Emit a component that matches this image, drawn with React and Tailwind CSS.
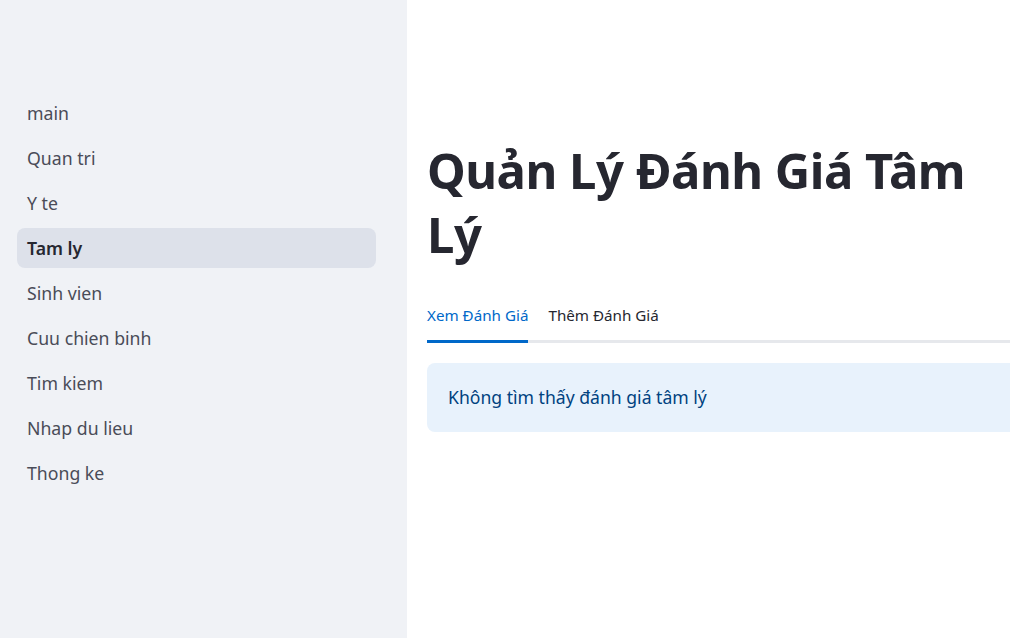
const navItems = [
  "main",
  "Quan tri",
  "Y te",
  "Tam ly",
  "Sinh vien",
  "Cuu chien binh",
  "Tim kiem",
  "Nhap du lieu",
  "Thong ke",
];

function Sidebar() {
  return (
    <aside className="w-[407px] shrink-0 bg-[#f0f2f6] pt-[93px] pl-[17px] pr-[31px]">
      <nav className="flex flex-col gap-[5px]">
        {navItems.map((item) => {
          const active = item === "Tam ly";
          return (
            <div
              key={item}
              className={
                active
                  ? "h-[40px] flex items-center px-[10px] rounded-[8px] bg-[#dde1ea] text-[17.7px] font-semibold text-[#262730]"
                  : "h-[40px] flex items-center px-[10px] rounded-[8px] text-[17.7px] text-[#4a4c58]"
              }
            >
              {item}
            </div>
          );
        })}
      </nav>
    </aside>
  );
}

export default function App() {
  return (
    <div
      className="flex w-[1010px] h-[638px] overflow-hidden bg-white"
      style={{ fontFamily: '"Noto Sans", "Open Sans", sans-serif' }}
    >
      <Sidebar />
      <main className="flex-1 overflow-hidden pl-[20px] pt-[138px]">
        <div className="w-[620px]">
          <h1 className="w-[560px] text-[49px] leading-[64px] font-bold text-[#262730] tracking-[-0.5px]">
            Quản Lý Đánh Giá Tâm Lý
          </h1>
          <div className="mt-[38px] relative">
            <div className="flex gap-[20px] text-[15.2px]">
              <div className="pb-[13px] border-b-[3px] border-[#0068c9] text-[#0068c9]">
                Xem Đánh Giá
              </div>
              <div className="pb-[13px] text-[#262730]">Thêm Đánh Giá</div>
            </div>
            <div className="h-[3px] bg-[#e6e8ec] -mt-[3px]" />
          </div>
          <div className="mt-[20px] h-[69px] flex items-center px-[21px] rounded-[8px] bg-[#e8f2fc] text-[17.6px] text-[#004280]">
            Không tìm thấy đánh giá tâm lý
          </div>
        </div>
      </main>
    </div>
  );
}
